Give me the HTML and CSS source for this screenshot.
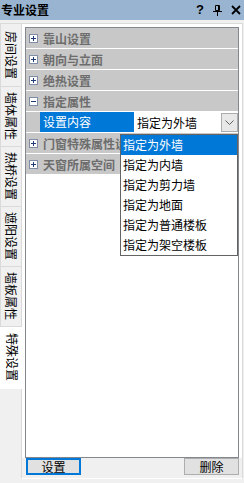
FILE: index.html
```html
<!DOCTYPE html>
<html lang="zh-CN">
  <head>
    <meta charset="UTF-8" />
    <meta name="viewport" content="width=device-width, initial-scale=1.0" />
    <title>专业设置</title>
    <link rel="stylesheet" href="styles.css">
  </head>
  <body>
    <div class="window">
      <div class="titlebar">
        <span class="title">专业设置</span>
        <div class="caption-buttons">
          <span class="help">?</span>
          <svg class="pin" width="9" height="12" viewBox="0 0 9 12">
            <path d="M2.5 1.5h4v5h-4z" fill="none" stroke="#000" stroke-width="1" />
            <path d="M5.5 1v6" stroke="#000" stroke-width="1" />
            <path d="M0 7.5h9" stroke="#000" stroke-width="1" />
            <path d="M4.5 8v4" stroke="#000" stroke-width="1" />
          </svg>
          <svg class="close" width="10" height="10" viewBox="0 0 10 10">
            <path d="M1 1l8 8M9 1l-8 8" stroke="#000" stroke-width="1.8" />
          </svg>
        </div>
      </div>

      <div class="body">
        <div class="tabs">
          <div class="tab">房间设置</div>
          <div class="tab">墙体属性</div>
          <div class="tab">热桥设置</div>
          <div class="tab">遮阳设置</div>
          <div class="tab">墙板属性</div>
          <div class="tab active">特殊设置</div>
        </div>

        <div class="page">
          <div class="grid-frame">
            <div class="grid">
              <div class="category">
                <svg class="expander" width="9" height="9" viewBox="0 0 9 9">
                  <rect x="0.5" y="0.5" width="8" height="8" fill="#fff" stroke="#7f8ea6" />
                  <path d="M2 4.5h5M4.5 2v5" stroke="#1e3a78" stroke-width="1" />
                </svg>
                靠山设置
              </div>
              <div class="category">
                <svg class="expander" width="9" height="9" viewBox="0 0 9 9">
                  <rect x="0.5" y="0.5" width="8" height="8" fill="#fff" stroke="#7f8ea6" />
                  <path d="M2 4.5h5M4.5 2v5" stroke="#1e3a78" stroke-width="1" />
                </svg>
                朝向与立面
              </div>
              <div class="category">
                <svg class="expander" width="9" height="9" viewBox="0 0 9 9">
                  <rect x="0.5" y="0.5" width="8" height="8" fill="#fff" stroke="#7f8ea6" />
                  <path d="M2 4.5h5M4.5 2v5" stroke="#1e3a78" stroke-width="1" />
                </svg>
                绝热设置
              </div>
              <div class="category">
                <svg class="expander" width="9" height="9" viewBox="0 0 9 9">
                  <rect x="0.5" y="0.5" width="8" height="8" fill="#fff" stroke="#7f8ea6" />
                  <path d="M2 4.5h5" stroke="#1e3a78" stroke-width="1" />
                </svg>
                指定属性
              </div>
              <div class="property">
                <div class="margin"></div>
                <div class="label">设置内容</div>
                <div class="value">
                  <span>指定为外墙</span>
                  <div class="drop-btn">
                    <svg width="9" height="5" viewBox="0 0 9 5">
                      <path d="M0.5 0.5l4 4 4-4" fill="none" stroke="#606060" stroke-width="1" />
                    </svg>
                  </div>
                </div>
              </div>
              <div class="category">
                <svg class="expander" width="9" height="9" viewBox="0 0 9 9">
                  <rect x="0.5" y="0.5" width="8" height="8" fill="#fff" stroke="#7f8ea6" />
                  <path d="M2 4.5h5M4.5 2v5" stroke="#1e3a78" stroke-width="1" />
                </svg>
                门窗特殊属性设置
              </div>
              <div class="category">
                <svg class="expander" width="9" height="9" viewBox="0 0 9 9">
                  <rect x="0.5" y="0.5" width="8" height="8" fill="#fff" stroke="#7f8ea6" />
                  <path d="M2 4.5h5M4.5 2v5" stroke="#1e3a78" stroke-width="1" />
                </svg>
                天窗所属空间
              </div>

              <!-- open list of the 设置内容 combo, drawn over the rows below it -->
              <ul class="dropdown">
                <li class="selected">指定为外墙</li>
                <li>指定为内墙</li>
                <li>指定为剪力墙</li>
                <li>指定为地面</li>
                <li>指定为普通楼板</li>
                <li>指定为架空楼板</li>
              </ul>
            </div>
          </div>
          <div class="buttons">
            <button class="btn focused">设置</button>
            <button class="btn">删除</button>
          </div>
        </div>
      </div>
    </div>
  </body>
</html>
```

FILE: styles.css
```css
body {
  margin: 0;
  background-color: #f0f0f0;
  font-family: "Noto Sans CJK SC", "Liberation Sans", sans-serif;
  font-size: 12px;
  color: #000;
}

.window {
  width: 244px;
  height: 483px;
  overflow: hidden;
}

.titlebar {
  height: 20px;
  background-color: #99b4d1;
  display: flex;
  align-items: center;
  justify-content: space-between;
  padding: 0 3px 0 1px;
}

.title {
  font-weight: bold;
  font-size: 12px;
  line-height: 20px;
}

.caption-buttons {
  display: flex;
  align-items: center;
  gap: 9px;
}

.help {
  font-family: "Liberation Sans", sans-serif;
  font-weight: bold;
  font-size: 13px;
  line-height: 14px;
}

.body {
  display: flex;
  margin-top: 3px;
}

.tabs {
  width: 21px;
  display: flex;
  flex-direction: column;
}

.tab {
  height: 60px;
  box-sizing: border-box;
  border: 1px solid #dadada;
  border-right: none;
  border-top: none;
  background-color: #f0f0f0;
  writing-mode: vertical-rl;
  text-orientation: sideways;
  display: flex;
  align-items: center;
  justify-content: center;
  font-size: 12px;
  line-height: 20px;
}

.tab:first-child {
  height: 64px;
  border-top: 1px solid #dadada;
}

.tab.active {
  height: 62px;
  background-color: #fff;
  border-color: #fff;
  margin-right: -1px;
  position: relative;
  z-index: 1;
}

.page {
  width: 222px;
  height: 456px;
  box-sizing: border-box;
  border: 1px solid #dadada;
  border-bottom-color: #fff;
  background-color: #f0f0f0;
}

.grid-frame {
  background-color: #fff;
  padding: 3px 3px 0;
}

.grid {
  position: relative;
  height: 431px;
  box-sizing: border-box;
  border: 1px solid #828790;
  background-color: #fff;
}

.category {
  height: 20px;
  border-bottom: 1px solid #fff;
  background-color: #c8c8c8;
  color: #6d6d6d;
  font-weight: bold;
  display: flex;
  align-items: center;
  padding-left: 3px;
  white-space: nowrap;
  overflow: hidden;
}

.expander {
  margin-right: 5px;
  flex-shrink: 0;
}

.property {
  height: 20px;
  border-bottom: 1px solid #fff;
  display: flex;
}

.property .margin {
  width: 14px;
  background-color: #c8c8c8;
}

.property .label {
  width: 94px;
  background-color: #0078d7;
  color: #fff;
  padding-left: 3px;
  box-sizing: border-box;
  line-height: 20px;
}

.property .value {
  flex: 1;
  display: flex;
  justify-content: space-between;
  align-items: center;
  padding-left: 3px;
  background-color: #fff;
}

.drop-btn {
  width: 17px;
  height: 19px;
  box-sizing: border-box;
  border: 1px solid #acacac;
  background-color: #e8e8e8;
  display: flex;
  align-items: center;
  justify-content: center;
  margin-top: 1px;
}

.dropdown {
  position: absolute;
  left: 94px;
  top: 106px;
  width: 118px;
  margin: 0;
  padding: 0;
  list-style: none;
  box-sizing: border-box;
  border: 1px solid #646464;
  background-color: #fff;
  z-index: 10;
}

.dropdown li {
  height: 20px;
  line-height: 20px;
  padding-left: 2px;
}

.dropdown li.selected {
  background-color: #0078d7;
  color: #fff;
}

.buttons {
  display: flex;
  justify-content: space-between;
  padding: 0 3px 0 4px;
}

.btn {
  width: 55px;
  height: 17px;
  padding: 0;
  box-sizing: border-box;
  border: 1px solid #adadad;
  background-color: #e1e1e1;
  font-family: "Noto Sans CJK SC", sans-serif;
  font-size: 12px;
  line-height: 15px;
  color: #000;
}

.btn.focused {
  border: 2px solid #0078d7;
  line-height: 13px;
}
```
